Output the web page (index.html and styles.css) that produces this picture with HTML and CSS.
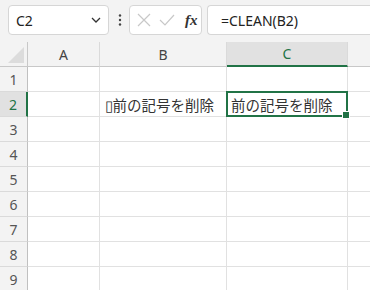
FILE: index.html
```html
<!DOCTYPE html>
<html lang="ja">
<head>
<meta charset="utf-8">
<link rel="stylesheet" href="styles.css">
</head>
<body>
<div class="toolbar">
  <div class="namebox">
    <span class="name">C2</span>
    <svg class="chev" width="10" height="6" viewBox="0 0 10 6"><path d="M1 1 L5 5 L9 1" fill="none" stroke="#333" stroke-width="1.3"/></svg>
  </div>
  <svg class="dots" width="4" height="12" viewBox="0 0 4 12"><circle cx="2" cy="1.5" r="1.2" fill="#444"/><circle cx="2" cy="6" r="1.2" fill="#444"/><circle cx="2" cy="10.5" r="1.2" fill="#444"/></svg>
  <div class="fnbox">
    <svg width="14" height="14" viewBox="0 0 14 14"><path d="M1 1 L13 13 M13 1 L1 13" stroke="#c8c8c8" stroke-width="1.2" fill="none"/></svg>
    <svg width="16" height="12" viewBox="0 0 16 12"><path d="M1 6 L6 11 L15 1" stroke="#c8c8c8" stroke-width="1.2" fill="none"/></svg>
    <span class="fx">fx</span>
  </div>
  <div class="formula">=CLEAN(B2)</div>
</div>
<div class="sheet">
  <div class="corner"><div class="tri"></div></div>
  <div class="colh">A</div>
  <div class="colh">B</div>
  <div class="colh sel">C</div>
  <div class="colh last"></div>

  <div class="rowh">1</div><div class="cell"></div><div class="cell"></div><div class="cell"></div><div class="cell last"></div>
  <div class="rowh sel">2</div><div class="cell"></div><div class="cell right">▯前の記号を削除</div><div class="cell active">前の記号を削除<span class="handle"></span></div><div class="cell last"></div>
  <div class="rowh">3</div><div class="cell"></div><div class="cell"></div><div class="cell"></div><div class="cell last"></div>
  <div class="rowh">4</div><div class="cell"></div><div class="cell"></div><div class="cell"></div><div class="cell last"></div>
  <div class="rowh">5</div><div class="cell"></div><div class="cell"></div><div class="cell"></div><div class="cell last"></div>
  <div class="rowh">6</div><div class="cell"></div><div class="cell"></div><div class="cell"></div><div class="cell last"></div>
  <div class="rowh">7</div><div class="cell"></div><div class="cell"></div><div class="cell"></div><div class="cell last"></div>
  <div class="rowh">8</div><div class="cell"></div><div class="cell"></div><div class="cell"></div><div class="cell last"></div>
  <div class="rowh">9</div><div class="cell"></div><div class="cell"></div><div class="cell"></div><div class="cell last"></div>
</div>
</body>
</html>
```
FILE: styles.css
```css
html, body {
  margin: 0;
  padding: 0;
  background: #f3f3f3;
  width: 370px;
  height: 290px;
  overflow: hidden;
  font-family: "Noto Sans", "Noto Sans CJK JP", sans-serif;
}
.toolbar {
  display: flex;
  align-items: center;
  height: 30px;
  padding: 5px 0 7px 8px;
}
.namebox {
  box-sizing: border-box;
  width: 101px;
  height: 30px;
  background: #fff;
  border: 1px solid #d6d6d6;
  border-radius: 4px;
  display: flex;
  align-items: center;
  justify-content: space-between;
  padding: 0 7px 0 7px;
  color: #222;
  font-size: 14px;
}
.dots {
  margin-left: 9px;
  margin-right: 7px;
}
.fnbox {
  box-sizing: border-box;
  width: 73px;
  height: 30px;
  background: #fff;
  border: 1px solid #d6d6d6;
  border-radius: 4px;
  display: flex;
  align-items: center;
  gap: 8px;
  padding: 0 0 0 7px;
}
.fx {
  font-family: "Liberation Serif", serif;
  font-style: italic;
  font-weight: bold;
  font-size: 15px;
  color: #333;
  margin-left: 2px;
}
.formula {
  box-sizing: border-box;
  flex: 1;
  height: 30px;
  margin-left: 5px;
  background: #fff;
  border: 1px solid #d6d6d6;
  border-right: none;
  border-radius: 4px 0 0 4px;
  display: flex;
  align-items: center;
  padding-left: 13px;
  font-size: 14px;
  color: #222;
}
.sheet {
  display: grid;
  grid-template-columns: 28px 72px 127px 121px 1fr;
  grid-template-rows: 25px;
  grid-auto-rows: 25px;
  background: #fff;
}
.corner {
  background: #f3f3f3;
  border-right: 1px solid #c8c8c8;
  border-bottom: 1px solid #c8c8c8;
  box-sizing: border-box;
  position: relative;
}
.tri {
  position: absolute;
  right: 3px;
  bottom: 3px;
  width: 0;
  height: 0;
  border-left: 16px solid transparent;
  border-bottom: 16px solid #dcdcdc;
}
.colh {
  box-sizing: border-box;
  background: #f3f3f3;
  border-right: 1px solid #dadada;
  border-bottom: 1px solid #c8c8c8;
  display: flex;
  align-items: center;
  justify-content: center;
  font-size: 14px;
  color: #444;
}
.colh.sel {
  background: #e1e1e1;
  color: #217346;
  border-bottom: 2px solid #217346;
}
.colh.last { border-right: none; }
.rowh {
  box-sizing: border-box;
  background: #f3f3f3;
  border-right: 1px solid #c0c0c0;
  border-bottom: 1px solid #dadada;
  display: flex;
  align-items: center;
  justify-content: center;
  font-size: 14px;
  color: #555;
}
.rowh.sel {
  background: #e1e1e1;
  color: #217346;
  border-right: 2px solid #217346;
}
.cell {
  box-sizing: border-box;
  border-right: 1px solid #e1e1e1;
  border-bottom: 1px solid #e1e1e1;
  display: flex;
  align-items: center;
  font-size: 14.5px;
  color: #333;
  white-space: nowrap;
  overflow: visible;
}
.cell.last { border-right: none; }
.cell.right {
  justify-content: flex-end;
  padding-right: 12px;
}
.cell.active {
  position: relative;
  border: 2px solid #217346;
  margin: -1px 0 0 -1px;
  width: calc(100% + 1px);
  height: 26px;
  padding-left: 3px;
}
.handle {
  position: absolute;
  right: -4px;
  bottom: -4px;
  width: 6px;
  height: 6px;
  background: #217346;
  border: 1px solid #fff;
}
```
